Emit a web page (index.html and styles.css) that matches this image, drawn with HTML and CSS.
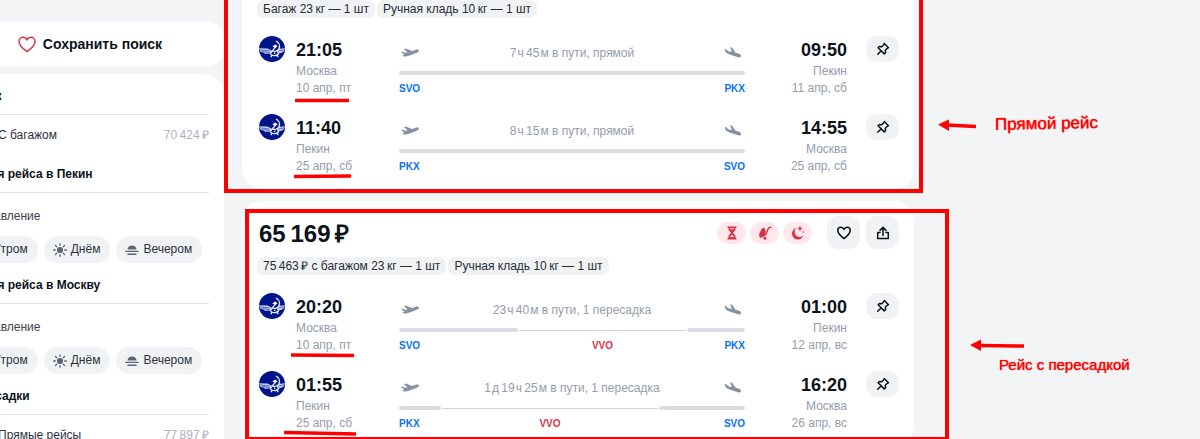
FILE: index.html
```html
<!DOCTYPE html>
<html lang="ru">
<head>
<meta charset="utf-8">
<title>Авиабилеты Москва — Пекин</title>
<link rel="stylesheet" href="styles.css">
</head>
<body>
<svg class="defs" aria-hidden="true">
  <symbol id="logo" viewBox="0 0 26 26">
    <circle cx="13" cy="13" r="13" fill="#00148a"/>
    <path d="M0 12.200 8.500 12.600 12.500 14.600 11.500 17.600 6 17.800 4.200 16.500 1.200 15.600ZM26 12.200 20.500 12.800 17.500 14.600 18.500 17.200 22 17 24.600 15.600Z" fill="#c3ccee"/>
    <path d="M1 13.900 10.500 15M3 15.600 10.500 16.300M25 13.900 19 14.900" stroke="#00148a" fill="none" stroke-width=".5"/>
    <path d="M17 5C21.500 7.500 21.700 13 17.500 15 15.800 15.800 14.200 15.200 13.300 14.400M11.500 17 16.700 10.800M11.500 17C12 20.500 19 20.500 19.700 17M13 18.500 12 21.200M18 18.500 19.200 21.200M15.600 16.500V18" stroke="#e6ebfb" fill="none" stroke-width="1.300"/>
    <path d="m13.300 10.600 3-2 2.200 1.600-2 1.800Z" fill="#fff"/>
  </symbol>
  <symbol id="takeoff" viewBox="0 0 18 10">
    <path d="M0 4 1.400 3.400 4.200 4.800 6.500 4.200 3 1.200 4.800.500 11 3 14.800 1.700C16.600 1.100 18 1.600 17.900 2.700 17.800 3.700 16.600 4.400 15.200 4.900L8.500 7.500C6 8.500 3 9 1.800 7.900 1.100 7.300 3 7 3.300 6.400Z" fill="#8592a2"/>
  </symbol>
  <symbol id="landing" viewBox="0 0 16 11">
    <path d="M0 1.800 1.300 2.200 3.200 4.300 6.700 4.900 5.200 0 7.100.700 10.600 5.700 13.600 6.600C15.400 7.200 16.300 8.500 15.900 9.500 15.500 10.500 14.200 10.600 13 10.200L5.300 7.700C2.500 6.800.500 5.800.200 4.200Z" fill="#8592a2"/>
  </symbol>
  <symbol id="pin" viewBox="0 0 14 14">
    <path d="M8.300 1.500 12.500 5.700 11.300 6.300 9.300 8.200 9.600 10.600 8.200 11.900 2.100 5.800 3.400 4.500 5.800 4.700 7.700 2.700ZM5 9 1.700 12.300" fill="none" stroke="currentColor" stroke-width="1.500" stroke-linejoin="round" stroke-linecap="round"/>
  </symbol>
  <symbol id="heart" viewBox="0 0 18 17">
    <path d="M9 15.600C4.600 12.400 1 9.200 1 5.400 1 3 2.800 1.200 5 1.200c1.700 0 3.200 1 4 2.800.8-1.800 2.300-2.800 4-2.800 2.200 0 4 1.800 4 4.200 0 3.800-3.600 7-8 10.200Z" fill="none" stroke="currentColor" stroke-width="var(--w)" stroke-linejoin="round"/>
  </symbol>
  <symbol id="share" viewBox="0 0 14 14">
    <path d="M4 6.500H1.700v6h10.600v-6H10M7 9.500V1.600M4 4.400 7 1.400l3 3" fill="none" stroke="currentColor" stroke-width="1.500" stroke-linejoin="round" stroke-linecap="round"/>
  </symbol>
  <symbol id="hourglass" viewBox="0 0 10 14">
    <path d="M.5.400h9v1.500h-1V4L6 6.800 8.500 9.800v2.300h1v1.500h-9v-1.500h1V9.800L4 6.800 1.500 4V1.900h-1Z" fill="#d93548"/>
    <path d="M3 2.300h4v1H3ZM5 8.600 7.200 11H2.800Z" fill="#ffe8eb"/>
  </symbol>
  <symbol id="luggage" viewBox="0 0 14 14">
    <path d="M3.300 3.300 6 1.500 7.900 5 6.600 9.800 2 12.200.900 8.800Z" fill="#d93548"/>
    <path d="M12.900 1.200 10.600 1.800 7.900 8.200 5 10.600" fill="none" stroke="#d93548" stroke-width="1.500" stroke-linecap="round"/>
    <circle cx="7" cy="12.200" r="1.500" fill="#d93548"/>
  </symbol>
  <symbol id="moon" viewBox="0 0 14 14">
    <path d="M5.300 2A5.900 5.900 0 1 0 12.500 9.600 5.200 5.200 0 0 1 5.300 2Z" fill="#d93548"/>
    <path d="M9 .300 9.600 2 11.300 2.600 9.600 3.200 9 4.900 8.400 3.200 6.700 2.600 8.400 2Z" fill="#d93548" stroke="#d93548" stroke-width=".5"/>
    <circle cx="12.300" cy="6" r=".8" fill="#d93548"/>
  </symbol>
  <symbol id="sun" viewBox="0 0 14 14">
    <circle cx="7" cy="7" r="3.100" fill="#5a6677"/>
    <path d="M7 .700v1.600M7 11.700v1.600M.700 7h1.600M11.700 7h1.600M2.500 2.500l1.200 1.200M10.300 10.300l1.200 1.200M2.500 11.500l1.200-1.200M10.300 3.700l1.200-1.200" stroke="#5a6677" stroke-width="1.300" stroke-linecap="round"/>
  </symbol>
  <symbol id="sunset" viewBox="0 0 14 14">
    <path d="M2.500 6.500C2.700 3.800 4.500 2.400 7 2.400s4.300 1.400 4.500 4.100Z" fill="#5a6677"/>
    <path d="M.900 8.400h12.200M3 11.200h8" stroke="#5a6677" stroke-width="1.400" stroke-linecap="round"/>
  </symbol>
</svg>

<div class="page">
  <aside class="sidebar">
    <button class="save" type="button"><svg class="save-heart"><use href="#heart"/></svg>Сохранить поиск</button>
    <div class="filters">
      <h2>Багаж</h2>
      <label class="option"><input type="checkbox"><span>С багажом</span><span class="cost">70&thinsp;424&thinsp;₽</span></label>
      <h2>Время рейса в Пекин</h2>
      <p class="caption">Отправление</p>
      <div class="periods">
        <button type="button"><svg><use href="#sunset"/></svg>Утром</button>
        <button type="button"><svg><use href="#sun"/></svg>Днём</button>
        <button type="button"><svg><use href="#sunset"/></svg>Вечером</button>
      </div>
      <h2>Время рейса в Москву</h2>
      <p class="caption">Отправление</p>
      <div class="periods">
        <button type="button"><svg><use href="#sunset"/></svg>Утром</button>
        <button type="button"><svg><use href="#sun"/></svg>Днём</button>
        <button type="button"><svg><use href="#sunset"/></svg>Вечером</button>
      </div>
      <h2>Пересадки</h2>
      <label class="option"><input type="checkbox"><span>Прямые рейсы</span><span class="cost">77&thinsp;897&thinsp;₽</span></label>
    </div>
  </aside>

  <main class="results">
    <article class="ticket ticket-first">
      <div class="chips"><span>Багаж 23&thinsp;кг — 1 шт</span><span>Ручная кладь 10&thinsp;кг — 1 шт</span></div>
      <section class="leg">
        <svg class="logo"><use href="#logo"/></svg>
        <div class="point"><b>21:05</b><span>Москва</span><span>10 апр, пт</span></div>
        <div class="route">
          <div class="route-head"><svg class="takeoff"><use href="#takeoff"/></svg><span>7&hairsp;ч&thinsp;45&hairsp;м в пути, прямой</span><svg class="landing"><use href="#landing"/></svg></div>
          <div class="bar"><i></i></div>
          <div class="codes direct"><span>SVO</span><span>PKX</span></div>
        </div>
        <div class="point arrival"><b>09:50</b><span>Пекин</span><span>11 апр, сб</span></div>
        <button class="pin" type="button" aria-label="Закрепить"><svg><use href="#pin"/></svg></button>
      </section>
      <section class="leg">
        <svg class="logo"><use href="#logo"/></svg>
        <div class="point"><b>11:40</b><span>Пекин</span><span>25 апр, сб</span></div>
        <div class="route">
          <div class="route-head"><svg class="takeoff"><use href="#takeoff"/></svg><span>8&hairsp;ч&thinsp;15&hairsp;м в пути, прямой</span><svg class="landing"><use href="#landing"/></svg></div>
          <div class="bar"><i></i></div>
          <div class="codes direct"><span>PKX</span><span>SVO</span></div>
        </div>
        <div class="point arrival"><b>14:55</b><span>Москва</span><span>25 апр, сб</span></div>
        <button class="pin" type="button" aria-label="Закрепить"><svg><use href="#pin"/></svg></button>
      </section>
    </article>

    <article class="ticket">
      <header class="ticket-head">
        <strong class="price">65&thinsp;169&thinsp;₽</strong>
        <div class="tags">
          <span><svg><use href="#hourglass"/></svg></span>
          <span><svg><use href="#luggage"/></svg></span>
          <span><svg><use href="#moon"/></svg></span>
        </div>
        <div class="actions">
          <button type="button" aria-label="В избранное"><svg><use href="#heart"/></svg></button>
          <button type="button" aria-label="Поделиться"><svg><use href="#share"/></svg></button>
        </div>
      </header>
      <div class="chips"><span>75&thinsp;463&thinsp;₽ с багажом 23&thinsp;кг — 1 шт</span><span>Ручная кладь 10&thinsp;кг — 1 шт</span></div>
      <section class="leg">
        <svg class="logo"><use href="#logo"/></svg>
        <div class="point"><b>20:20</b><span>Москва</span><span>10 апр, пт</span></div>
        <div class="route">
          <div class="route-head"><svg class="takeoff"><use href="#takeoff"/></svg><span>23&hairsp;ч&thinsp;40&hairsp;м в пути, 1 пересадка</span><svg class="landing"><use href="#landing"/></svg></div>
          <div class="bar" style="grid-template-columns:119fr 167fr 58fr"><i></i><i class="layover"></i><i></i></div>
          <div class="codes" style="grid-template-columns:119fr 167fr 58fr"><span>SVO</span><span class="stop">VVO</span><span>PKX</span></div>
        </div>
        <div class="point arrival"><b>01:00</b><span>Пекин</span><span>12 апр, вс</span></div>
        <button class="pin" type="button" aria-label="Закрепить"><svg><use href="#pin"/></svg></button>
      </section>
      <section class="leg">
        <svg class="logo"><use href="#logo"/></svg>
        <div class="point"><b>01:55</b><span>Пекин</span><span>25 апр, сб</span></div>
        <div class="route">
          <div class="route-head"><svg class="takeoff"><use href="#takeoff"/></svg><span>1&hairsp;д&thinsp;19&hairsp;ч&thinsp;25&hairsp;м в пути, 1 пересадка</span><svg class="landing"><use href="#landing"/></svg></div>
          <div class="bar" style="grid-template-columns:42fr 216fr 86fr"><i></i><i class="layover"></i><i></i></div>
          <div class="codes" style="grid-template-columns:42fr 216fr 86fr"><span>PKX</span><span class="stop">VVO</span><span>SVO</span></div>
        </div>
        <div class="point arrival"><b>16:20</b><span>Москва</span><span>26 апр, вс</span></div>
        <button class="pin" type="button" aria-label="Закрепить"><svg><use href="#pin"/></svg></button>
      </section>
    </article>
  </main>

  <svg class="marks" width="1200" height="439" viewBox="0 0 1200 439" fill="none" stroke="#f00" stroke-width="4" aria-hidden="true">
    <path d="M226 -4V191H921V-4"/>
    <rect x="247" y="211" width="700" height="228"/>
    <path d="M295 100.500H349M294 176.500 351 176M291 355 354 355.500M284 432.500 356 434" stroke-width="3.500"/>
    <path d="M946 125 976 126.500M979 345.500 1024 346" stroke-width="3.500"/>
    <path d="M938 124.500 949 119.500V131ZM970 345 981 339.500V351Z" fill="#f00" stroke="none"/>
  </svg>
  <span class="note note-direct">Прямой рейс</span>
  <span class="note note-transfer">Рейс с пересадкой</span>
</div>
</body>
</html>
```

FILE: styles.css
```css
* { box-sizing: border-box; }
body {
  margin: 0;
  height: 100vh;
  overflow: hidden;
  background: #f2f4f6;
  color: #0c131d;
  font: 12px/17px "Liberation Sans", Arial, sans-serif;
}
button { font: inherit; color: inherit; border: 0; padding: 0; cursor: pointer; }
h2, p { margin: 0; }
.defs { position: absolute; width: 0; height: 0; }
.page { position: relative; display: flex; gap: 18px; height: 100%; overflow: hidden; }

/* Filters */
.sidebar {
  flex: 0 0 268px;
  margin-left: -44px;
  padding-top: 22px;
  display: flex;
  flex-direction: column;
  gap: 8px;
}
.save {
  display: flex;
  align-items: center;
  justify-content: center;
  gap: 7px;
  height: 44px;
  flex-shrink: 0;
  background: #fff;
  border-radius: 16px;
  font-size: 14px;
  font-weight: bold;
}
.save-heart { width: 18px; height: 17px; color: #d9344a; --w: 1.5; }
.filters {
  background: #fff;
  border-radius: 20px 20px 0 0;
  padding: 4px 15px 0 10px;
  flex: 1 0 auto;
}
.filters h2 {
  height: 37px;
  padding-top: 10px;
  border-bottom: 1px solid #e0e4ea;
  font-size: 12px;
  line-height: 17px;
}
.option {
  display: flex;
  align-items: center;
  height: 41px;
  color: #2b333f;
}
.option input { width: 16px; height: 16px; margin: 0 16px 0 0; }
.cost { margin-left: auto; color: #aeb1bf; }
.caption { padding: 15px 0 11px; color: #3a4350; }
.periods { display: flex; gap: 6px; margin-bottom: 4px; }
.periods button {
  display: flex;
  align-items: center;
  gap: 4px;
  height: 27px;
  padding: 0 10px 0 9px;
  border-radius: 14px;
  background: #f0f2f3;
  color: #2b333f;
}
.periods svg { width: 14px; height: 14px; }

/* Tickets */
.results { flex: 0 1 672px; display: flex; flex-direction: column; gap: 12px; }
.ticket {
  flex-shrink: 0;
  padding: 15px 15px 14px;
  background: #fff;
  border-radius: 20px;
}
.ticket-first { padding-top: 0; border-radius: 0 0 20px 20px; }
.ticket-head { display: flex; align-items: center; margin-bottom: 8px; }
.price { margin-left: 2px; padding-top: 2px; font-size: 24px; line-height: 31px; }
.tags { display: flex; gap: 4px; margin-left: auto; }
.tags span {
  display: grid;
  place-items: center;
  width: 29px;
  height: 22px;
  border-radius: 11px;
  background: #ffe8eb;
}
.tags svg { width: 14px; height: 14px; }
.actions { display: flex; gap: 6px; margin-left: 15px; }
.actions button, .pin {
  display: grid;
  place-items: center;
  width: 33px;
  height: 33px;
  border-radius: 11px;
  background: #f0f2f3;
}
.actions svg, .pin svg { width: 14px; height: 14px; --w: 2; }
.chips { display: flex; gap: 2px; }
.chips span {
  height: 18px;
  padding: 0 6px;
  border-radius: 7px;
  background: #f0f2f3;
  color: #262e3a;
  line-height: 18px;
}
.leg {
  display: grid;
  grid-template-columns: 26px 92px 1fr 91px 41px;
  column-gap: 11px;
  margin: 18px 0 0 2px;
}
.leg + .leg { margin-top: 17px; }
.logo { width: 26px; height: 26px; }
.point { display: flex; flex-direction: column; color: #939dab; }
.point b { padding-top: 2px; font-size: 18px; line-height: 25px; color: #0c131d; }
.arrival { text-align: right; }
.route-head {
  display: flex;
  align-items: center;
  justify-content: space-between;
  height: 35px;
  padding: 0 4px 0 2px;
  color: #939dab;
}
.takeoff { width: 18px; height: 10px; margin-bottom: 2px; }
.landing { width: 16px; height: 11px; margin-bottom: 2px; }
.bar { display: grid; align-items: center; column-gap: 1px; height: 4px; }
.bar i { height: 4px; border-radius: 2px; background: #d9dde4; }
.bar .layover { height: 1px; background: #cdd4de; }
.codes {
  display: grid;
  column-gap: 1px;
  margin-top: 5px;
  font-size: 10px;
  font-weight: bold;
  color: #0a70f5;
}
.direct { grid-template-columns: 1fr 1fr; }
.codes span:last-child { text-align: right; }
.codes .stop { text-align: center; color: #d9344a; }
.pin { height: 26px; justify-self: end; }

/* Hand-drawn notes over the results */
.marks { position: absolute; left: 0; top: 0; pointer-events: none; }
.note { position: absolute; color: #f00; white-space: nowrap; text-shadow: 0 0 1px #f00; }
.note-direct { left: 995px; top: 114px; font-size: 17px; line-height: 20px; transform: rotate(-1deg); }
.note-transfer { left: 999px; top: 355px; font-size: 15px; line-height: 20px; }
```
